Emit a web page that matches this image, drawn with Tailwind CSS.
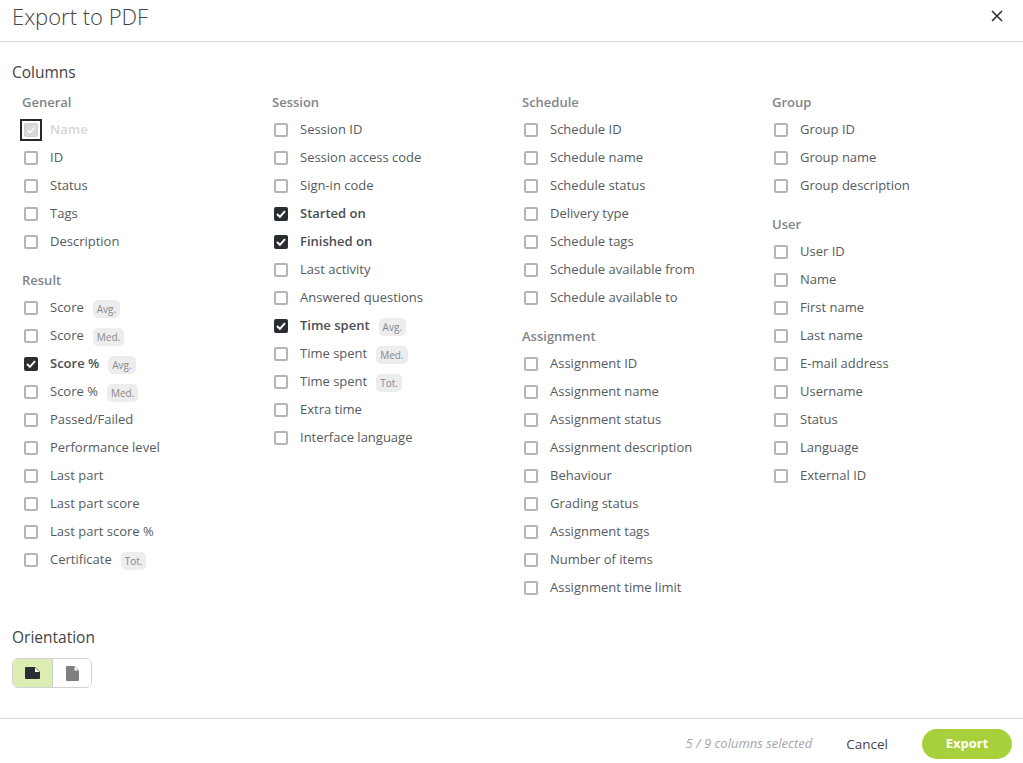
<!DOCTYPE html>
<html><head><meta charset="utf-8"><script src="https://cdn.jsdelivr.net/npm/@tailwindcss/browser@4"></script></head>
<body class="bg-white">
<div class="w-[1023px] h-[763px] flex flex-col overflow-hidden font-['Open_Sans',sans-serif] text-[13px] text-[#555b60]">
<header class="h-[42px] shrink-0 border-b border-[#d4d4d4] flex items-center justify-between pl-3 pr-[20px]">
<h1 class="text-[22px] font-light leading-[34px] -mt-[10px] text-[#3f4447]">Export to PDF</h1>
<svg class="-mt-[10px]" width="12" height="12" viewBox="0 0 12 12"><path d="M1 1L11 11M11 1L1 11" stroke="#2b2f33" stroke-width="1.6"/></svg>
</header>
<main class="flex-1 pl-3">
<h2 class="mt-[18px] h-[24px] leading-[24px] text-[15.5px] font-medium text-[#3f4447]">Columns</h2>
<div class="mt-[6px] flex pl-[10px] h-[511px]">

<div class="w-[250px]">
<h3 class="h-[26px] leading-[25px] font-semibold text-[#80858a]">General</h3>
<div class="h-7 flex items-center"><span class="-ml-[2px] mr-2 w-[22px] h-[22px] border-2 border-[#23282c] flex items-center justify-center"><span class="w-3.5 h-3.5 rounded-[2px] bg-[#d9d9d9] border border-[#d0d0d0] flex items-center justify-center"><svg width="10" height="10" viewBox="0 0 10 10"><path d="M1.5 5.2L4 7.6L8.6 2.4" fill="none" stroke="#fff" stroke-width="1.4"/></svg></span></span><span class="font-semibold text-[#d6d6d6]">Name</span></div>
<div class="h-7 flex items-center"><span class="ml-[2px] mr-3 w-3.5 h-3.5 rounded-[2px] border-2 border-[#b5b5b5]"></span><span>ID</span></div>
<div class="h-7 flex items-center"><span class="ml-[2px] mr-3 w-3.5 h-3.5 rounded-[2px] border-2 border-[#b5b5b5]"></span><span>Status</span></div>
<div class="h-7 flex items-center"><span class="ml-[2px] mr-3 w-3.5 h-3.5 rounded-[2px] border-2 border-[#b5b5b5]"></span><span>Tags</span></div>
<div class="h-7 flex items-center"><span class="ml-[2px] mr-3 w-3.5 h-3.5 rounded-[2px] border-2 border-[#b5b5b5]"></span><span>Description</span></div>
<h3 class="mt-[12px] h-[26px] leading-[25px] font-semibold text-[#80858a]">Result</h3>
<div class="h-7 flex items-center"><span class="ml-[2px] mr-3 w-3.5 h-3.5 rounded-[2px] border-2 border-[#b5b5b5]"></span><span>Score</span><span class="ml-[9px] mt-[2px] h-[18px] px-1 leading-[18px] rounded-[5px] bg-[#ededed] text-[10px] text-[#85898d]">Avg.</span></div>
<div class="h-7 flex items-center"><span class="ml-[2px] mr-3 w-3.5 h-3.5 rounded-[2px] border-2 border-[#b5b5b5]"></span><span>Score</span><span class="ml-[9px] mt-[2px] h-[18px] px-1 leading-[18px] rounded-[5px] bg-[#ededed] text-[10px] text-[#85898d]">Med.</span></div>
<div class="h-7 flex items-center"><span class="ml-[2px] mr-3 w-3.5 h-3.5 rounded-[2px] bg-[#2a2e32] flex items-center justify-center"><svg width="10" height="10" viewBox="0 0 10 10"><path d="M1 5L3.9 7.8L9 2.2" fill="none" stroke="#fff" stroke-width="1.9"/></svg></span><span class="font-semibold text-[#4a4f54]">Score %</span><span class="ml-[9px] mt-[2px] h-[18px] px-1 leading-[18px] rounded-[5px] bg-[#ededed] text-[10px] text-[#85898d]">Avg.</span></div>
<div class="h-7 flex items-center"><span class="ml-[2px] mr-3 w-3.5 h-3.5 rounded-[2px] border-2 border-[#b5b5b5]"></span><span>Score %</span><span class="ml-[9px] mt-[2px] h-[18px] px-1 leading-[18px] rounded-[5px] bg-[#ededed] text-[10px] text-[#85898d]">Med.</span></div>
<div class="h-7 flex items-center"><span class="ml-[2px] mr-3 w-3.5 h-3.5 rounded-[2px] border-2 border-[#b5b5b5]"></span><span>Passed/Failed</span></div>
<div class="h-7 flex items-center"><span class="ml-[2px] mr-3 w-3.5 h-3.5 rounded-[2px] border-2 border-[#b5b5b5]"></span><span>Performance level</span></div>
<div class="h-7 flex items-center"><span class="ml-[2px] mr-3 w-3.5 h-3.5 rounded-[2px] border-2 border-[#b5b5b5]"></span><span>Last part</span></div>
<div class="h-7 flex items-center"><span class="ml-[2px] mr-3 w-3.5 h-3.5 rounded-[2px] border-2 border-[#b5b5b5]"></span><span>Last part score</span></div>
<div class="h-7 flex items-center"><span class="ml-[2px] mr-3 w-3.5 h-3.5 rounded-[2px] border-2 border-[#b5b5b5]"></span><span>Last part score %</span></div>
<div class="h-7 flex items-center"><span class="ml-[2px] mr-3 w-3.5 h-3.5 rounded-[2px] border-2 border-[#b5b5b5]"></span><span>Certificate</span><span class="ml-[9px] mt-[2px] h-[18px] px-1 leading-[18px] rounded-[5px] bg-[#ededed] text-[10px] text-[#85898d]">Tot.</span></div>
</div>

<div class="w-[250px]">
<h3 class="h-[26px] leading-[25px] font-semibold text-[#80858a]">Session</h3>
<div class="h-7 flex items-center"><span class="ml-[2px] mr-3 w-3.5 h-3.5 rounded-[2px] border-2 border-[#b5b5b5]"></span><span>Session ID</span></div>
<div class="h-7 flex items-center"><span class="ml-[2px] mr-3 w-3.5 h-3.5 rounded-[2px] border-2 border-[#b5b5b5]"></span><span>Session access code</span></div>
<div class="h-7 flex items-center"><span class="ml-[2px] mr-3 w-3.5 h-3.5 rounded-[2px] border-2 border-[#b5b5b5]"></span><span>Sign-in code</span></div>
<div class="h-7 flex items-center"><span class="ml-[2px] mr-3 w-3.5 h-3.5 rounded-[2px] bg-[#2a2e32] flex items-center justify-center"><svg width="10" height="10" viewBox="0 0 10 10"><path d="M1 5L3.9 7.8L9 2.2" fill="none" stroke="#fff" stroke-width="1.9"/></svg></span><span class="font-semibold text-[#4a4f54]">Started on</span></div>
<div class="h-7 flex items-center"><span class="ml-[2px] mr-3 w-3.5 h-3.5 rounded-[2px] bg-[#2a2e32] flex items-center justify-center"><svg width="10" height="10" viewBox="0 0 10 10"><path d="M1 5L3.9 7.8L9 2.2" fill="none" stroke="#fff" stroke-width="1.9"/></svg></span><span class="font-semibold text-[#4a4f54]">Finished on</span></div>
<div class="h-7 flex items-center"><span class="ml-[2px] mr-3 w-3.5 h-3.5 rounded-[2px] border-2 border-[#b5b5b5]"></span><span>Last activity</span></div>
<div class="h-7 flex items-center"><span class="ml-[2px] mr-3 w-3.5 h-3.5 rounded-[2px] border-2 border-[#b5b5b5]"></span><span>Answered questions</span></div>
<div class="h-7 flex items-center"><span class="ml-[2px] mr-3 w-3.5 h-3.5 rounded-[2px] bg-[#2a2e32] flex items-center justify-center"><svg width="10" height="10" viewBox="0 0 10 10"><path d="M1 5L3.9 7.8L9 2.2" fill="none" stroke="#fff" stroke-width="1.9"/></svg></span><span class="font-semibold text-[#4a4f54]">Time spent</span><span class="ml-[9px] mt-[2px] h-[18px] px-1 leading-[18px] rounded-[5px] bg-[#ededed] text-[10px] text-[#85898d]">Avg.</span></div>
<div class="h-7 flex items-center"><span class="ml-[2px] mr-3 w-3.5 h-3.5 rounded-[2px] border-2 border-[#b5b5b5]"></span><span>Time spent</span><span class="ml-[9px] mt-[2px] h-[18px] px-1 leading-[18px] rounded-[5px] bg-[#ededed] text-[10px] text-[#85898d]">Med.</span></div>
<div class="h-7 flex items-center"><span class="ml-[2px] mr-3 w-3.5 h-3.5 rounded-[2px] border-2 border-[#b5b5b5]"></span><span>Time spent</span><span class="ml-[9px] mt-[2px] h-[18px] px-1 leading-[18px] rounded-[5px] bg-[#ededed] text-[10px] text-[#85898d]">Tot.</span></div>
<div class="h-7 flex items-center"><span class="ml-[2px] mr-3 w-3.5 h-3.5 rounded-[2px] border-2 border-[#b5b5b5]"></span><span>Extra time</span></div>
<div class="h-7 flex items-center"><span class="ml-[2px] mr-3 w-3.5 h-3.5 rounded-[2px] border-2 border-[#b5b5b5]"></span><span>Interface language</span></div>
</div>

<div class="w-[250px]">
<h3 class="h-[26px] leading-[25px] font-semibold text-[#80858a]">Schedule</h3>
<div class="h-7 flex items-center"><span class="ml-[2px] mr-3 w-3.5 h-3.5 rounded-[2px] border-2 border-[#b5b5b5]"></span><span>Schedule ID</span></div>
<div class="h-7 flex items-center"><span class="ml-[2px] mr-3 w-3.5 h-3.5 rounded-[2px] border-2 border-[#b5b5b5]"></span><span>Schedule name</span></div>
<div class="h-7 flex items-center"><span class="ml-[2px] mr-3 w-3.5 h-3.5 rounded-[2px] border-2 border-[#b5b5b5]"></span><span>Schedule status</span></div>
<div class="h-7 flex items-center"><span class="ml-[2px] mr-3 w-3.5 h-3.5 rounded-[2px] border-2 border-[#b5b5b5]"></span><span>Delivery type</span></div>
<div class="h-7 flex items-center"><span class="ml-[2px] mr-3 w-3.5 h-3.5 rounded-[2px] border-2 border-[#b5b5b5]"></span><span>Schedule tags</span></div>
<div class="h-7 flex items-center"><span class="ml-[2px] mr-3 w-3.5 h-3.5 rounded-[2px] border-2 border-[#b5b5b5]"></span><span>Schedule available from</span></div>
<div class="h-7 flex items-center"><span class="ml-[2px] mr-3 w-3.5 h-3.5 rounded-[2px] border-2 border-[#b5b5b5]"></span><span>Schedule available to</span></div>
<h3 class="mt-[12px] h-[26px] leading-[25px] font-semibold text-[#80858a]">Assignment</h3>
<div class="h-7 flex items-center"><span class="ml-[2px] mr-3 w-3.5 h-3.5 rounded-[2px] border-2 border-[#b5b5b5]"></span><span>Assignment ID</span></div>
<div class="h-7 flex items-center"><span class="ml-[2px] mr-3 w-3.5 h-3.5 rounded-[2px] border-2 border-[#b5b5b5]"></span><span>Assignment name</span></div>
<div class="h-7 flex items-center"><span class="ml-[2px] mr-3 w-3.5 h-3.5 rounded-[2px] border-2 border-[#b5b5b5]"></span><span>Assignment status</span></div>
<div class="h-7 flex items-center"><span class="ml-[2px] mr-3 w-3.5 h-3.5 rounded-[2px] border-2 border-[#b5b5b5]"></span><span>Assignment description</span></div>
<div class="h-7 flex items-center"><span class="ml-[2px] mr-3 w-3.5 h-3.5 rounded-[2px] border-2 border-[#b5b5b5]"></span><span>Behaviour</span></div>
<div class="h-7 flex items-center"><span class="ml-[2px] mr-3 w-3.5 h-3.5 rounded-[2px] border-2 border-[#b5b5b5]"></span><span>Grading status</span></div>
<div class="h-7 flex items-center"><span class="ml-[2px] mr-3 w-3.5 h-3.5 rounded-[2px] border-2 border-[#b5b5b5]"></span><span>Assignment tags</span></div>
<div class="h-7 flex items-center"><span class="ml-[2px] mr-3 w-3.5 h-3.5 rounded-[2px] border-2 border-[#b5b5b5]"></span><span>Number of items</span></div>
<div class="h-7 flex items-center"><span class="ml-[2px] mr-3 w-3.5 h-3.5 rounded-[2px] border-2 border-[#b5b5b5]"></span><span>Assignment time limit</span></div>
</div>

<div class="w-[240px]">
<h3 class="h-[26px] leading-[25px] font-semibold text-[#80858a]">Group</h3>
<div class="h-7 flex items-center"><span class="ml-[2px] mr-3 w-3.5 h-3.5 rounded-[2px] border-2 border-[#b5b5b5]"></span><span>Group ID</span></div>
<div class="h-7 flex items-center"><span class="ml-[2px] mr-3 w-3.5 h-3.5 rounded-[2px] border-2 border-[#b5b5b5]"></span><span>Group name</span></div>
<div class="h-7 flex items-center"><span class="ml-[2px] mr-3 w-3.5 h-3.5 rounded-[2px] border-2 border-[#b5b5b5]"></span><span>Group description</span></div>
<h3 class="mt-[12px] h-[26px] leading-[25px] font-semibold text-[#80858a]">User</h3>
<div class="h-7 flex items-center"><span class="ml-[2px] mr-3 w-3.5 h-3.5 rounded-[2px] border-2 border-[#b5b5b5]"></span><span>User ID</span></div>
<div class="h-7 flex items-center"><span class="ml-[2px] mr-3 w-3.5 h-3.5 rounded-[2px] border-2 border-[#b5b5b5]"></span><span>Name</span></div>
<div class="h-7 flex items-center"><span class="ml-[2px] mr-3 w-3.5 h-3.5 rounded-[2px] border-2 border-[#b5b5b5]"></span><span>First name</span></div>
<div class="h-7 flex items-center"><span class="ml-[2px] mr-3 w-3.5 h-3.5 rounded-[2px] border-2 border-[#b5b5b5]"></span><span>Last name</span></div>
<div class="h-7 flex items-center"><span class="ml-[2px] mr-3 w-3.5 h-3.5 rounded-[2px] border-2 border-[#b5b5b5]"></span><span>E-mail address</span></div>
<div class="h-7 flex items-center"><span class="ml-[2px] mr-3 w-3.5 h-3.5 rounded-[2px] border-2 border-[#b5b5b5]"></span><span>Username</span></div>
<div class="h-7 flex items-center"><span class="ml-[2px] mr-3 w-3.5 h-3.5 rounded-[2px] border-2 border-[#b5b5b5]"></span><span>Status</span></div>
<div class="h-7 flex items-center"><span class="ml-[2px] mr-3 w-3.5 h-3.5 rounded-[2px] border-2 border-[#b5b5b5]"></span><span>Language</span></div>
<div class="h-7 flex items-center"><span class="ml-[2px] mr-3 w-3.5 h-3.5 rounded-[2px] border-2 border-[#b5b5b5]"></span><span>External ID</span></div>
</div>
</div>

<h2 class="mt-[24px] h-[24px] leading-[24px] text-[15.5px] font-medium text-[#3f4447]">Orientation</h2>
<div class="mt-[9px] flex w-[80px] h-[30px] rounded-[6px] border border-[#d2d2d2] overflow-hidden">
<button class="w-[40px] bg-[#dcedb1] border-r border-[#d2d2d2] flex items-center justify-center"><svg width="15" height="12" viewBox="0 0 15 12"><path d="M1 0H10L15 5V11A1 1 0 0 1 14 12H1A1 1 0 0 1 0 11V1A1 1 0 0 1 1 0Z" fill="#2a2e32"/><path d="M10 0.6V5H14.4Z" fill="#fff"/></svg></button>
<button class="flex-1 bg-white flex items-center justify-center"><svg width="13" height="15" viewBox="0 0 13 15"><path d="M1 0H8.5L13 4.5V14A1 1 0 0 1 12 15H1A1 1 0 0 1 0 14V1A1 1 0 0 1 1 0Z" fill="#7f7f7f"/><path d="M8.5 0.6V4.5H12.4Z" fill="#fff"/></svg></button>
</div>
</main>
<footer class="h-[45px] shrink-0 border-t border-[#d4d4d4] flex items-center justify-end pr-[11px] pt-[6px]">
<span class="italic text-[13px] text-[#a3a6a9] mr-[34px]">5 / 9 columns selected</span>
<button class="font-medium text-[#3f4447] mr-[34px] text-[13.5px]">Cancel</button>
<button class="w-[90px] h-[30px] rounded-full bg-[#a8d03a] text-white font-bold">Export</button>
</footer>
</div>
</body></html>
